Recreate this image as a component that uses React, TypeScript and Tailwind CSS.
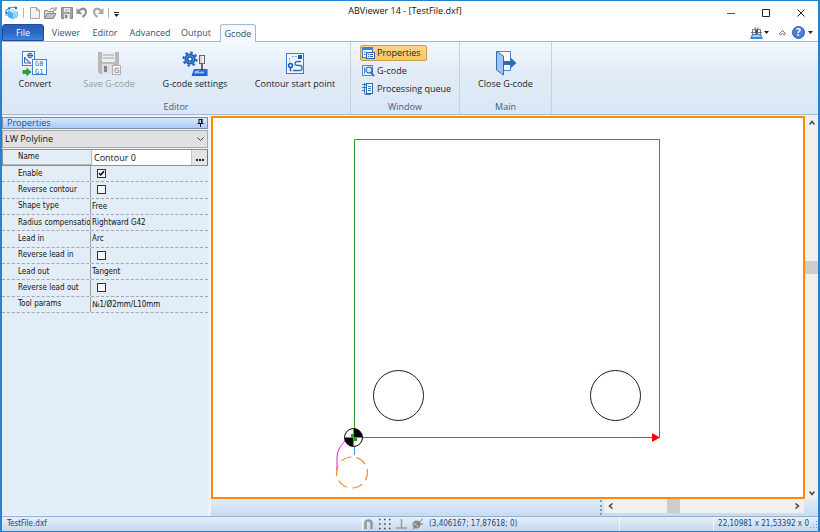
import type { ReactNode } from "react";

const UI = "font-['Open_Sans','Noto_Sans',sans-serif]";

/* ---------- quick access and title icons ---------- */

function CubeIcon() {
  return (
    <svg width="14" height="14" viewBox="0 0 14 14" aria-hidden="true">
      <path d="M3 4.500 8 3l5 2-4.500 2z" fill="#bfe6fb" />
      <path d="M3 4.500 8.500 7v6.500L3 11z" fill="#4bb1ee" />
      <path d="M8.500 7 13 5v6l-4.500 2.500z" fill="#8ed2f8" />
      <path d="M1 5 4 2l7-1M3 9H0.500M11 1v2M1 3.500v3" stroke="#2f8fce" strokeWidth="1" fill="none" />
      <circle cx="4" cy="2.500" r="1.200" fill="#1670b4" />
      <circle cx="11" cy="2" r="1.200" fill="#1670b4" />
      <circle cx="1.500" cy="7" r="1.200" fill="#1670b4" />
    </svg>
  );
}

function NewIcon() {
  return (
    <svg width="10" height="12" viewBox="0 0 10 12" aria-hidden="true">
      <path d="M0.500 0.500h6l3 3v8h-9z" fill="#f1f1f1" stroke="#a5a5a5" />
      <path d="M6.500 0.500v3h3" fill="none" stroke="#a5a5a5" />
    </svg>
  );
}

function OpenIcon() {
  return (
    <svg width="13" height="12" viewBox="0 0 13 12" aria-hidden="true">
      <path d="M0.500 11V3.500h3l1 1h5V6" fill="#d5d5d5" stroke="#8d8d8d" />
      <path d="M0.500 11.500 3 6.500h9L9.500 11.500z" fill="#bdbdbd" stroke="#8d8d8d" />
      <path d="M6 3c1-2 3-2.500 4.500-1.500M9 3h3V0" fill="none" stroke="#777" />
    </svg>
  );
}

function SaveIcon() {
  return (
    <svg width="12" height="12" viewBox="0 0 12 12" aria-hidden="true">
      <path d="M0.500 0.500h11v11h-11z" fill="#a2a2a2" stroke="#8a8a8a" />
      <path d="M3 1h6v4H3z" fill="#ececec" />
      <path d="M3 7h6v5H3z" fill="#e2e2e2" />
      <path d="M4 8h2v3H4z" fill="#818181" />
      <path d="M4 2.500h4M4 4h4" stroke="#aaa" strokeWidth="0.700" />
    </svg>
  );
}

function UndoIcon({ flip = false }: { flip?: boolean }) {
  return (
    <svg width="12" height="12" viewBox="0 0 12 12" className={flip ? "-scale-x-100" : ""} aria-hidden="true">
      <path d="M2.500 4.500C4.500 1.500 8 0.800 9.500 3c1.300 2-.2 5-3 7" fill="none" stroke={flip ? "#a9a9a9" : "#8d939b"} strokeWidth="2.400" />
      <path d="M0.500 1v6h6z" fill={flip ? "#a9a9a9" : "#8d939b"} />
    </svg>
  );
}

function DownTriangle() {
  return (
    <svg width="5" height="3" viewBox="0 0 5 3" aria-hidden="true">
      <path d="M0 0h5L2.500 3z" fill="#222" />
    </svg>
  );
}

/* ---------- ribbon icons ---------- */

function ConvertIcon() {
  return (
    <svg width="26" height="26" viewBox="0 0 26 26" aria-hidden="true">
      <rect x="0.500" y="0.500" width="12" height="14" fill="#f7faff" stroke="#3f7fd8" />
      <circle cx="8" cy="4.500" r="2.300" fill="none" stroke="#375b94" />
      <path d="M5 4.500h6M8 2v5M2.500 6v6h6zM2.500 7l6 6" fill="none" stroke="#375b94" strokeWidth="0.900" />
      <rect x="10.500" y="8.500" width="14" height="15" fill="#fff" stroke="#3f7fd8" />
      <text x="13" y="15" className="font-['DejaVu_Sans_Mono',monospace] text-[7px] leading-none" fill="#1d5fcb">G0</text>
      <text x="13" y="23" className="font-['DejaVu_Sans_Mono',monospace] text-[7px] leading-none" fill="#1d5fcb">G1</text>
      <path d="M0.500 19h4v-2.500l5 4.500-5 4.500V23h-4z" fill="#2e9f35" />
    </svg>
  );
}

function SaveGcodeIcon() {
  return (
    <svg width="26" height="26" viewBox="0 0 26 26" aria-hidden="true">
      <path d="M2 1h21v22H4l-2-2z" fill="#b9b9b9" />
      <path d="M6 1h13v10H6z" fill="#eee" />
      <path d="M7 4h11M7 7h11" stroke="#bbb" strokeWidth="1.500" />
      <path d="M6 13h11v10H6z" fill="#dedede" />
      <path d="M8 15h3v6H8z" fill="#858585" />
      <rect x="16.500" y="14.500" width="8" height="9" fill="#f2f2f2" stroke="#b0b0b0" />
      <text x="18" y="22" className="font-['DejaVu_Sans',sans-serif] text-[7px]" fill="#777">G</text>
    </svg>
  );
}

function SettingsIcon() {
  return (
    <svg width="26" height="26" viewBox="0 0 26 26" aria-hidden="true">
      <circle cx="8" cy="8" r="6.600" fill="none" stroke="#1c5fb8" strokeWidth="2" strokeDasharray="2.592 2.592" />
      <circle cx="8" cy="8" r="4.700" fill="#5aa0ea" stroke="#1c5fb8" strokeWidth="1.800" />
      <circle cx="8" cy="8" r="2.200" fill="#fff" stroke="#15509f" strokeWidth="1.300" />
      <path d="M12 18h13.500v7H9.500z" fill="#1763d8" />
      <path d="M13.500 19.500h10l-1.500 3H12z" fill="#8fc0fa" />
      <rect x="17.500" y="4.500" width="5" height="8" fill="#f0f0f0" stroke="#666" />
      <path d="M19 5v7" stroke="#bbb" />
      <path d="M20 13v7" stroke="#444" strokeWidth="1.600" />
      <path d="M17 21q3-3 6 0" fill="none" stroke="#234f91" />
    </svg>
  );
}

function ContourIcon() {
  return (
    <svg width="20" height="26" viewBox="0 0 20 26" aria-hidden="true">
      <rect x="1.500" y="2.500" width="17" height="20" fill="#eff6ff" stroke="#3e7bcb" />
      <path d="M12 5.500H7M4.500 7v4M5.500 20.500h1" fill="none" stroke="#7fa8dc" strokeDasharray="2 1" />
      <path d="M16 10.500h-3q-3 0-3 2t3 2h2q2 0 2 2.500t-2 2.500H8" fill="none" stroke="#2f6cc0" strokeWidth="1.300" />
      <rect x="13" y="4" width="4" height="4" fill="#1557bd" />
      <circle cx="5.500" cy="14.500" r="2" fill="#dcecff" stroke="#1557bd" strokeWidth="1.500" />
      <path d="M5.500 17v3" stroke="#1557bd" strokeWidth="1.500" />
    </svg>
  );
}

function CloseGcodeIcon() {
  return (
    <svg width="22" height="26" viewBox="0 0 22 26" aria-hidden="true">
      <path d="M2 0.500h13.500v19H9" fill="#f5f9ff" stroke="#4a83c9" />
      <path d="M1.500 0.500 8.500 5v19l-7-5z" fill="#9cc6f7" stroke="#2f6dbb" />
      <path d="M9 10h7V7l5.500 5-5.500 5v-3H9z" fill="#2b6cb8" />
    </svg>
  );
}

function PropertiesIcon() {
  return (
    <svg width="13" height="12" viewBox="0 0 13 12" aria-hidden="true">
      <rect x="0.500" y="0.500" width="10" height="10" fill="#f8fbff" stroke="#3d76bd" />
      <path d="M0 0h11v3H0z" fill="#3d7fd1" />
      <path d="M2 5h1.500M2 7.500h1.500" stroke="#2463b0" />
      <rect x="4.500" y="5.500" width="8" height="6" fill="#e7f1ff" stroke="#2f65a9" />
      <path d="M6 7.500h1M8 7.500h3M6 9.500h1M8 9.500h3" stroke="#2463b0" />
    </svg>
  );
}

function GcodeIcon() {
  return (
    <svg width="13" height="12" viewBox="0 0 13 12" aria-hidden="true">
      <rect x="0.500" y="0.500" width="10" height="10" fill="#eaf3ff" stroke="#5189ca" />
      <path d="M2.500 2v7" stroke="#5189ca" />
      <circle cx="7" cy="5" r="3" fill="#d6e8fc" stroke="#2863b0" strokeWidth="1.200" />
      <path d="m9 7.500 3 3.500" stroke="#2863b0" strokeWidth="1.800" />
    </svg>
  );
}

function QueueIcon() {
  return (
    <svg width="13" height="12" viewBox="0 0 13 12" aria-hidden="true">
      <rect x="4.500" y="0.500" width="6" height="10" fill="#f2f8ff" stroke="#2b68b5" />
      <path d="M6 3.500h3M6 5.500h3M6 7.500h3M2.500 0v11M0 1.500h4M0 4.500h4M0 7.500h2M3 11.500h6" stroke="#3b78c3" />
    </svg>
  );
}

/* ---------- ribbon pieces ---------- */

function BigButton({ icon, label, width, disabled = false }: { icon: ReactNode; label: string; width: string; disabled?: boolean }) {
  return (
    <button
      type="button"
      disabled={disabled}
      className={`flex flex-col items-center gap-px whitespace-nowrap pt-[9px] text-[9px] leading-3 ${width} ${disabled ? "text-[#9a9a9a]" : "text-[#1e1e1e]"}`}
    >
      {icon}
      {label}
    </button>
  );
}

function SmallButton({ icon, label, active = false }: { icon: ReactNode; label: string; active?: boolean }) {
  return (
    <button
      type="button"
      className={`flex h-4 items-center gap-0.5 whitespace-nowrap rounded-[2px] border pl-px text-[9px] leading-3 text-[#1e1e1e] ${active ? "w-[67px] border-[#c7a04f] bg-linear-to-b from-[#fcd48c] to-[#ffc75c]" : "border-transparent"}`}
    >
      {icon}
      {label}
    </button>
  );
}

function Group({ title, width, children }: { title: string; width: string; children: ReactNode }) {
  return (
    <section className={`flex shrink-0 flex-col border-r border-[#c3d3e6] ${width}`}>
      <div className="flex h-[57px]">{children}</div>
      <h2 className="pt-0.5 text-center text-[9px] leading-3 text-[#44587c]">{title}</h2>
    </section>
  );
}

/* ---------- property grid ---------- */

type Row = { label: string; value?: string; checked?: boolean };

const rows: Row[] = [
  { label: "Enable", checked: true },
  { label: "Reverse contour", checked: false },
  { label: "Shape type", value: "Free" },
  { label: "Radius compensation", value: "Rightward G42" },
  { label: "Lead in", value: "Arc" },
  { label: "Reverse lead in", checked: false },
  { label: "Lead out", value: "Tangent" },
  { label: "Reverse lead out", checked: false },
  { label: "Tool params", value: "№1/Ø2mm/L10mm" },
];

function PropertyRow({ row }: { row: Row }) {
  const id = row.label.toLowerCase().replaceAll(" ", "-");
  return (
    <div className="flex items-center border-b border-dashed border-[#a2a8af]">
      <label htmlFor={id} className="flex h-full w-[89px] shrink-0 items-center overflow-hidden whitespace-nowrap border-r border-[#a0a0a0] pl-4">
        {row.label}
      </label>
      {row.value === undefined ? (
        <span className="relative ml-1.5 flex size-[9px]">
          <input id={id} type="checkbox" defaultChecked={row.checked} className="peer size-[9px] appearance-none border border-[#333] bg-[#f4f8fd]" />
          <svg viewBox="0 0 9 9" className="pointer-events-none absolute inset-0 hidden size-[9px] peer-checked:block" aria-hidden="true">
            <path d="M2 4.200 3.700 6 7 2.300" fill="none" stroke="#000" strokeWidth="1.500" />
          </svg>
        </span>
      ) : (
        <input id={id} defaultValue={row.value} className="h-full w-0 grow bg-transparent pl-px outline-none" />
      )}
    </div>
  );
}

function PropertiesPanel() {
  return (
    <aside className="mt-px flex w-[206px] shrink-0 flex-col">
      <header className="flex h-3 items-center justify-between border border-[#7d8da3] bg-linear-to-b from-[#d8e8fc] to-[#a9cbf8] pl-1 pr-[3px] text-[9px] leading-[10px] text-[#1c4f9c]">
        <h2>Properties</h2>
        <svg width="7" height="8" viewBox="0 0 7 8" aria-hidden="true">
          <path d="M2 0.500h3.500M2 0v4.500M4.500 0v4.500M0.500 4.500h6M3.500 5v3" stroke="#111" />
          <path d="M4 0h1.500v4H4z" fill="#111" />
        </svg>
      </header>
      <div className="relative mb-px mt-px flex h-[18px]">
        <select aria-label="Entity type" className="w-full appearance-none border border-[#a8a8a8] bg-[#e1e1e1] pl-0.5 text-[9px] leading-3 text-[#111]">
          <option>LW Polyline</option>
        </select>
        <svg width="7" height="4" viewBox="0 0 7 4" className="pointer-events-none absolute right-1 top-[7px]" aria-hidden="true">
          <path d="m0.500 0.500 3 3 3-3" fill="none" stroke="#444" />
        </svg>
      </div>
      <div className="mb-px flex grow flex-col bg-[#e3edf8] font-['DejaVu_Sans_Condensed','DejaVu_Sans',sans-serif] text-[8px] leading-3 text-[#111]">
        <div className="flex h-[17px] shrink-0 border border-[#909090] border-r-[#777]">
          <label htmlFor="name" className="flex w-[89px] shrink-0 items-center border-b border-r border-[#b5b5b5] pl-[15px]">
            Name
          </label>
          <input id="name" defaultValue="Contour 0" className="w-0 grow bg-white pl-0.5 font-['Open_Sans',sans-serif] text-[9px] outline-none" />
          <button type="button" aria-label="Edit name" className="flex w-4 items-center justify-center gap-px border-l border-[#c6c6c6] bg-[#e4e4e4] pt-1">
            <span className="size-0.5 bg-[#222]" />
            <span className="size-0.5 bg-[#222]" />
            <span className="size-0.5 bg-[#222]" />
          </button>
        </div>
        <div className="grid h-[147px] shrink-0 grid-rows-9">
          {rows.map((row) => (
            <PropertyRow key={row.label} row={row} />
          ))}
        </div>
      </div>
    </aside>
  );
}

/* ---------- drawing ---------- */

function Drawing() {
  return (
    <svg className="block size-full" role="img" aria-label="Contour drawing">
      <path d="M141.500 319.500V21.500h305v298z" fill="none" stroke="#2f9a2f" />
      <path d="M424 319.500h15" stroke="#ff2a2a" />
      <path d="M439 315v9l8-4.500z" fill="#ff0000" />
      <circle cx="185.500" cy="277.500" r="25" fill="none" stroke="#1c1c1c" />
      <circle cx="402.500" cy="277.500" r="25" fill="none" stroke="#1c1c1c" />
      <path d="M132 323q-8 8-8 16v13" fill="none" stroke="#f11de8" />
      <path d="M141.500 324v13" stroke="#3d8df5" />
      <circle cx="139" cy="354.500" r="15.500" fill="none" stroke="#f58a32" strokeWidth="1.200" strokeDasharray="11 5" strokeDashoffset="3" />
      <circle cx="140.500" cy="319.500" r="9" fill="#fff" stroke="#000" />
      <path d="M140.500 319.500v-9a9 9 0 0 1 9 9zM140.500 319.500v9a9 9 0 0 1-9-9z" fill="#000" />
      <path d="M138 316h2.500v3H138zM141 320h3v3h-3z" fill="#14a514" />
    </svg>
  );
}

function Chevron({ className }: { className: string }) {
  return (
    <svg width="6" height="6" viewBox="0 0 6 6" className={className} aria-hidden="true">
      <path d="m0.500 4.500 2.500-3 2.500 3" fill="none" stroke="#444" strokeWidth="1.500" />
    </svg>
  );
}

function Workspace() {
  return (
    <main className="flex min-w-0 grow flex-col">
      <div className="flex min-h-0 grow">
        <div className="min-w-0 grow border-2 border-[#ff8c00] bg-white">
          <Drawing />
        </div>
        <div className="flex w-[13px] shrink-0 flex-col items-center bg-[#f0f0f0]">
          <button type="button" aria-label="Scroll up" className="flex h-3.5 items-center">
            <Chevron className="" />
          </button>
          <div className="flex w-full grow flex-col py-[131px]">
            <div className="h-[13px] w-full bg-[#cdcdcd]" />
          </div>
          <button type="button" aria-label="Scroll down" className="flex h-3 items-center">
            <Chevron className="rotate-180" />
          </button>
        </div>
      </div>
      <div className="flex h-[17px] shrink-0 bg-linear-to-b from-[#dfebf9] to-[#c7dbf2]">
        <div className="flex grow justify-end">
          <div className="my-px w-0 border-r-2 border-dotted border-[#8499b3]" />
        </div>
        <div className="ml-0.5 mr-3.5 flex h-3.5 w-[200px] items-center bg-[#f0f0f0]">
          <button type="button" aria-label="Scroll left" className="flex w-3.5 justify-center">
            <Chevron className="-rotate-90" />
          </button>
          <div className="h-full grow px-[49px]">
            <div className="h-full w-[13px] bg-[#cdcdcd]" />
          </div>
          <button type="button" aria-label="Scroll right" className="flex w-3.5 justify-center">
            <Chevron className="rotate-90" />
          </button>
        </div>
      </div>
    </main>
  );
}

/* ---------- bars ---------- */

function TitleBar() {
  return (
    <header className="flex h-[23px] shrink-0 items-center">
      <div className="flex grow basis-0 items-center pl-[3px]">
        <CubeIcon />
        <span className="ml-1 h-2.5 w-px bg-[#b5b5b5]" />
        <button type="button" aria-label="New" className="ml-1.5"><NewIcon /></button>
        <button type="button" aria-label="Open" className="ml-1"><OpenIcon /></button>
        <button type="button" aria-label="Save" className="ml-1"><SaveIcon /></button>
        <button type="button" aria-label="Undo" className="ml-[3px]"><UndoIcon /></button>
        <button type="button" aria-label="Redo" className="ml-1"><UndoIcon flip /></button>
        <span className="ml-1 h-2.5 w-px bg-[#b5b5b5]" />
        <button type="button" aria-label="Customize toolbar" className="ml-[5px] flex flex-col items-center gap-px pt-1">
          <span className="h-px w-[5px] bg-[#222]" />
          <DownTriangle />
        </button>
      </div>
      <h1 className="-mt-1 text-[9px] leading-3 text-[#111]">ABViewer 14 - [TestFile.dxf]</h1>
      <div className="flex grow basis-0 items-center justify-end gap-[27px] pr-[13px]">
        <button type="button" aria-label="Minimize">
          <svg width="8" height="8" viewBox="0 0 8 8"><path d="M0 4.500h8" stroke="#555" /></svg>
        </button>
        <button type="button" aria-label="Maximize">
          <svg width="8" height="8" viewBox="0 0 8 8"><path d="M0.500 0.500h7v7h-7z" fill="none" stroke="#222" /></svg>
        </button>
        <button type="button" aria-label="Close">
          <svg width="8" height="8" viewBox="0 0 8 8"><path d="m0.500 0.500 7 7m0-7-7 7" stroke="#222" /></svg>
        </button>
      </div>
    </header>
  );
}

const tabs = [
  { name: "Viewer", width: "w-11" },
  { name: "Editor", width: "w-[34px]" },
  { name: "Advanced", width: "w-14" },
  { name: "Output", width: "w-9" },
];

function TabBar() {
  return (
    <nav className="flex h-[18px] shrink-0 border-b border-[#a3b9d1] text-[9px] leading-3 text-[#3b4f73]">
      <button type="button" className="w-[42px] rounded-t-[3px] border border-[#1f4c9c] bg-linear-to-b from-[#2e5fb2] via-[#2c66c4] to-[#3e86de] text-white">
        File
      </button>
      {tabs.map((tab) => (
        <button key={tab.name} type="button" className={`flex items-center justify-center ${tab.width}`}>
          {tab.name}
        </button>
      ))}
      <button type="button" className="-mb-px ml-1.5 w-9 rounded-t-[3px] border border-b-0 border-[#a3b9d1] bg-[#f5f9fe]">
        Gcode
      </button>
      <div className="flex grow items-center justify-end pr-[5px]">
        <button type="button" aria-label="Machine" className="flex items-center gap-px">
          <svg width="13" height="12" viewBox="0 0 13 12">
            <path d="M2 7h9l2 5H0z" fill="#3e86d0" />
            <path d="M3 8h7l1 2H2z" fill="#a9d1f5" />
            <path d="M2.500 8V2.500h8V8M1 5.500h11M5 0v3M8 0v3" fill="none" stroke="#777" />
            <path d="M5 3h3v3L6.500 8 5 6z" fill="#555" />
          </svg>
          <DownTriangle />
        </button>
        <button type="button" aria-label="Collapse ribbon" className="ml-2.5">
          <svg width="7" height="6" viewBox="0 0 7 6">
            <path d="M0.500 3.500 3.500 0.500l3 3-1 1.500-2-1.500-2 1.500z" fill="#fff" stroke="#555" strokeWidth="0.900" />
          </svg>
        </button>
        <button type="button" aria-label="Help" className="ml-1.5 flex items-center gap-[3px]">
          <svg width="13" height="13" viewBox="0 0 13 13">
            <circle cx="6.500" cy="6.500" r="6" fill="#4c7dce" stroke="#335fae" />
            <text x="6.500" y="10" textAnchor="middle" className="font-['Open_Sans',sans-serif] text-[10px] font-bold" fill="#fff">?</text>
          </svg>
          <DownTriangle />
        </button>
      </div>
    </nav>
  );
}

function Ribbon() {
  return (
    <div className="flex h-[73px] shrink-0 border-b border-[#a3b9d1] bg-linear-to-b from-[#f4f8fe] via-[#e2ecf8] via-40% to-[#dae7f5]">
      <Group title="Editor" width="w-[349px]">
        <BigButton icon={<ConvertIcon />} label="Convert" width="w-[66px]" />
        <BigButton icon={<SaveGcodeIcon />} label="Save G-code" width="w-[82px]" disabled />
        <BigButton icon={<SettingsIcon />} label="G-code settings" width="w-[90px]" />
        <BigButton icon={<ContourIcon />} label="Contour start point" width="w-[110px]" />
      </Group>
      <Group title="Window" width="w-[109px]">
        <div className="flex flex-col items-start gap-0.5 pl-[9px] pt-[3px]">
          <SmallButton icon={<PropertiesIcon />} label="Properties" active />
          <SmallButton icon={<GcodeIcon />} label="G-code" />
          <SmallButton icon={<QueueIcon />} label="Processing queue" />
        </div>
      </Group>
      <Group title="Main" width="w-[92px]">
        <BigButton icon={<CloseGcodeIcon />} label="Close G-code" width="w-full" />
      </Group>
    </div>
  );
}

function StatusBar() {
  return (
    <footer className="flex h-[15px] shrink-0 items-center border-t border-[#93afcf] bg-linear-to-b from-[#e6f0fb] to-[#c3d8f0] font-['DejaVu_Sans_Condensed','DejaVu_Sans',sans-serif] text-[8px] leading-3 text-[#253f78]">
      <span className="grow basis-0 pl-[5px]">TestFile.dxf</span>
      <div className="flex h-full items-center gap-[5px] border-l border-white/70">
        <svg width="11" height="12" viewBox="0 0 11 12" aria-hidden="true">
          <path d="M2.500 11V5q0-2.500 3-2.500t3 2.500v6" fill="none" stroke="#999" strokeWidth="2.600" />
        </svg>
        <svg width="12" height="12" viewBox="0 0 12 12" aria-hidden="true">
          <path d="M0 1.500h12M0 6h12M0 10.500h12" stroke="#444" strokeWidth="1.500" strokeDasharray="1.500 3.500" />
        </svg>
        <svg width="11" height="12" viewBox="0 0 11 12" aria-hidden="true">
          <path d="M5.500 1v9M0 10h11" stroke="#9b9b9b" strokeWidth="1.500" />
        </svg>
        <svg width="11" height="12" viewBox="0 0 11 12" aria-hidden="true">
          <circle cx="4.500" cy="6.500" r="4" fill="#909090" />
          <path d="M1 11.500 11 0.500M6 6h5" stroke="#777" />
          <path d="m2 5 4 4" stroke="#c8c8c8" />
        </svg>
      </div>
      <span className="w-[196px] pl-1.5">(3,406167; 17,87618; 0)</span>
      <div className="flex h-full w-[199px] items-center justify-end border-l border-white/70">
        <span className="border-l border-white/70 pl-1">22,10981 x 21,53392 x 0</span>
        <svg width="9" height="9" viewBox="0 0 9 9" aria-hidden="true">
          <path d="M7 1h1v1H7zM4 4h1v1H4zM7 4h1v1H7zM1 7h1v1H1zM4 7h1v1H4zM7 7h1v1H7z" fill="#7890b0" />
        </svg>
      </div>
    </footer>
  );
}

export default function App() {
  return (
    <div className={`flex h-screen w-full flex-col border border-l-2 border-r-2 border-[#2083d8] bg-white ${UI}`}>
      <TitleBar />
      <TabBar />
      <Ribbon />
      <div className="flex min-h-0 grow gap-[3px] bg-[#eff3f8] pt-px">
        <PropertiesPanel />
        <Workspace />
      </div>
      <StatusBar />
    </div>
  );
}
